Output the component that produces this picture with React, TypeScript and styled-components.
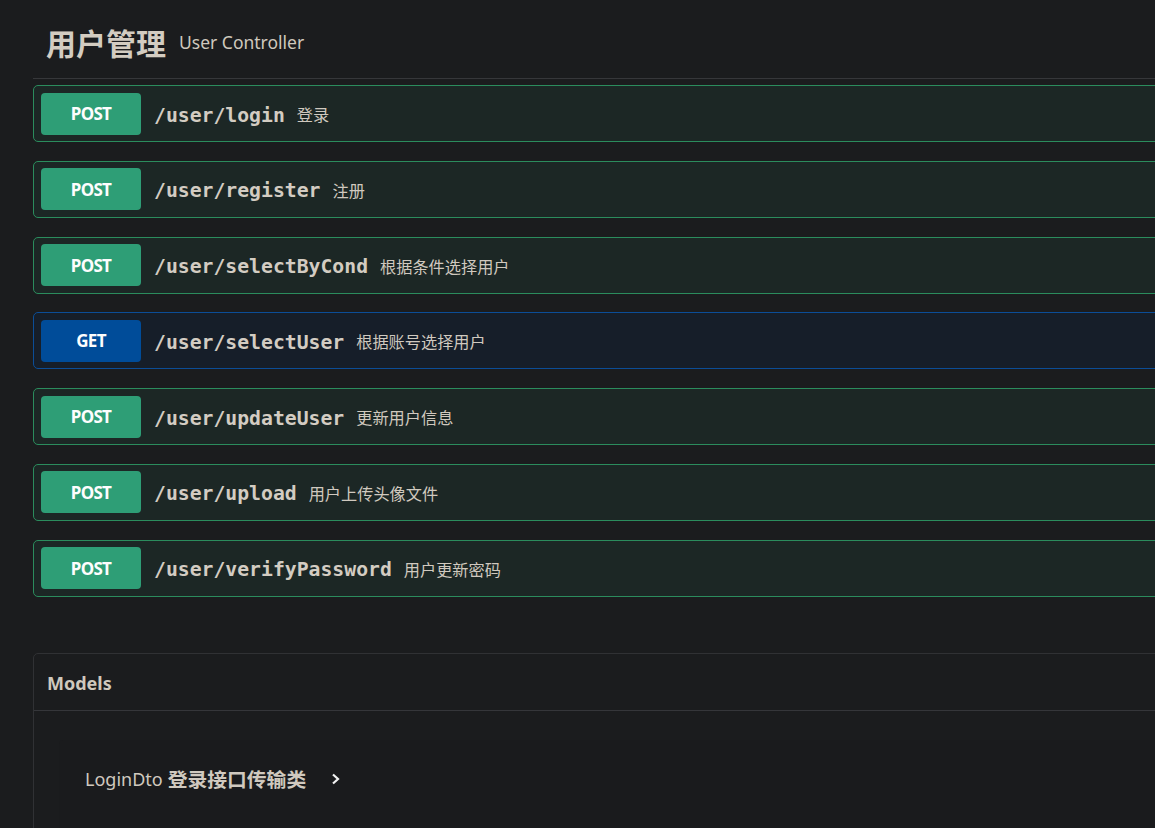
import React from "react";
import styled, { createGlobalStyle } from "styled-components";

const Global = createGlobalStyle`
  html, body {
    margin: 0;
    padding: 0;
    background: #1b1c1e;
    overflow: hidden;
  }
  body {
    font-family: "Noto Sans", "Noto Sans CJK SC", sans-serif;
    color: #d0c9bf;
  }
`;

const Page = styled.div`
  width: 1300px;
  height: 828px;
  overflow: hidden;
  padding: 0 0 0 33px;
  box-sizing: border-box;
`;

const TagHeader = styled.div`
  display: flex;
  align-items: center;
  gap: 13px;
  padding: 22px 25px 16px 13px;
  height: 79px;
  box-sizing: border-box;
  border-bottom: 1px solid #36373a;
  margin-bottom: 6px;
`;

const TagTitle = styled.span`
  font-family: "Noto Sans CJK SC", "Noto Sans", sans-serif;
  font-weight: 700;
  font-size: 30px;
  line-height: 36px;
  color: #d3ccc1;
`;

const TagSub = styled.span`
  font-family: "Noto Sans", "Noto Sans CJK SC", sans-serif;
  font-size: 17.5px;
  color: #cfc8bd;
`;

const OpList = styled.div`
  display: flex;
  flex-direction: column;
  gap: 18.8px;
`;

const OpBlock = styled.div<{ $kind: "post" | "get" }>`
  display: flex;
  align-items: center;
  height: 57px;
  box-sizing: border-box;
  padding: 0 7px;
  border: 1px solid ${(p) => (p.$kind === "get" ? "#0b4d97" : "#2b8c5d")};
  background: ${(p) => (p.$kind === "get" ? "#161e29" : "#1c2725")};
  border-radius: 5px;
`;

const Badge = styled.span<{ $kind: "post" | "get" }>`
  flex: none;
  width: 100px;
  height: 42px;
  display: flex;
  align-items: center;
  justify-content: center;
  border-radius: 4px;
  background: ${(p) => (p.$kind === "get" ? "#004c99" : "#2e9e76")};
  color: #fdfdfd;
  font-family: "Noto Sans", sans-serif;
  font-weight: 700;
  font-size: 17px;
  letter-spacing: -0.7px;
`;

const Path = styled.span`
  margin-left: 13px;
  padding-top: 3px;
  font-family: "DejaVu Sans Mono", monospace;
  font-weight: 700;
  font-size: 19.75px;
  color: #d3ccc2;
`;

const Summary = styled.span`
  margin-left: 12px;
  padding-top: 1px;
  font-family: "Noto Sans CJK SC", sans-serif;
  font-size: 16.2px;
  color: #d0c9bf;
`;

const Models = styled.section`
  margin-top: 56px;
  border: 1px solid #303134;
  border-radius: 5px;
  height: 400px;
`;

const ModelsHeader = styled.div`
  height: 57px;
  box-sizing: border-box;
  display: flex;
  align-items: center;
  padding: 3px 0 0 13px;
  border-bottom: 1px solid #35363a;
  font-family: "Noto Sans", sans-serif;
  font-weight: 700;
  font-size: 18px;
  color: #cfc8bd;
`;

const ModelWrap = styled.div`
  display: flex;
  align-items: flex-start;
`;

const ModelBox = styled.div`
  flex: 1;
  margin: 29px 25px 0 25px;
  height: 300px;
  background: #1a1b1d;
  border-radius: 4px;
  padding: 24px 0 0 26px;
  box-sizing: border-box;
  display: flex;
  align-items: flex-start;
`;

const ModelTitle = styled.div`
  display: flex;
  align-items: center;
  height: 30px;
  color: #d0c9bf;
`;

const ModelName = styled.span`
  font-family: "Noto Sans", sans-serif;
  font-size: 18px;
`;

const ModelDesc = styled.span`
  margin-left: 5px;
  font-family: "Noto Sans CJK SC", sans-serif;
  font-weight: 700;
  font-size: 19.8px;
`;

const Chevron = styled.svg`
  margin-left: 24px;
  width: 12px;
  height: 14px;
`;

type Op = { kind: "post" | "get"; path: string; summary: string };

const ops: Op[] = [
  { kind: "post", path: "/user/login", summary: "登录" },
  { kind: "post", path: "/user/register", summary: "注册" },
  { kind: "post", path: "/user/selectByCond", summary: "根据条件选择用户" },
  { kind: "get", path: "/user/selectUser", summary: "根据账号选择用户" },
  { kind: "post", path: "/user/updateUser", summary: "更新用户信息" },
  { kind: "post", path: "/user/upload", summary: "用户上传头像文件" },
  { kind: "post", path: "/user/verifyPassword", summary: "用户更新密码" },
];

export default function App() {
  return (
    <Page>
      <Global />
      <TagHeader>
        <TagTitle>用户管理</TagTitle>
        <TagSub>User Controller</TagSub>
      </TagHeader>
      <OpList>
        {ops.map((op) => (
          <OpBlock key={op.path} $kind={op.kind}>
            <Badge $kind={op.kind}>{op.kind.toUpperCase()}</Badge>
            <Path>{op.path}</Path>
            <Summary>{op.summary}</Summary>
          </OpBlock>
        ))}
      </OpList>
      <Models>
        <ModelsHeader>Models</ModelsHeader>
        <ModelWrap>
          <ModelBox>
            <ModelTitle>
              <ModelName>LoginDto</ModelName>
              <ModelDesc>登录接口传输类</ModelDesc>
              <Chevron viewBox="0 0 12 14">
                <polyline
                  points="3,2.5 8,7 3,11.5"
                  fill="none"
                  stroke="#f2f2f2"
                  strokeWidth="2.2"
                />
              </Chevron>
            </ModelTitle>
          </ModelBox>
        </ModelWrap>
      </Models>
    </Page>
  );
}
